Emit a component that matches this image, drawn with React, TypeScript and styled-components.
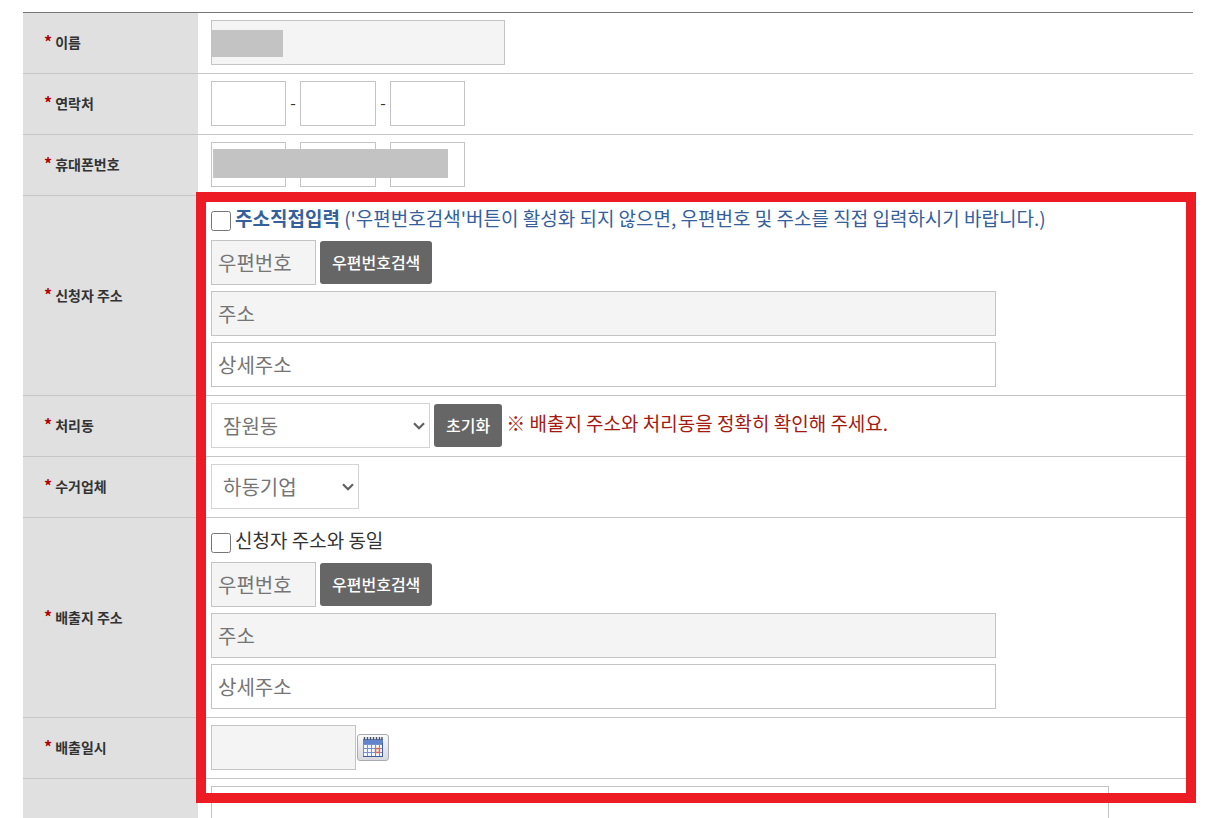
import React from "react";
import styled, { createGlobalStyle } from "styled-components";

const GlobalStyle = createGlobalStyle`
  * { box-sizing: border-box; }
  body {
    margin: 0;
    background: #fff;
    color: #333;
    font-family: "Noto Sans CJK KR", "Noto Sans", sans-serif;
    font-size: 19px;
  }
  button, input, select, textarea { font-family: inherit; margin: 0; }
`;

const Page = styled.main`
  height: 100vh;
  overflow: hidden;
  padding: 12px 15px 0 23px;
`;

const FormArea = styled.form`
  position: relative;
`;

const FormTable = styled.table`
  width: 100%;
  border-collapse: separate;
  border-spacing: 0;
  border-top: 1px solid #777;
`;

const HeadCell = styled.th`
  width: 175px;
  padding: 0 0 3px 21px;
  border-bottom: 1px solid #c6c6c6;
  background: #e0e0e0;
  text-align: left;
  vertical-align: middle;
  font-size: 14px;
  line-height: 20px;
  font-weight: 700;
`;

const Required = styled.span`
  margin-right: 3px;
  color: #b00000;
  font-size: 16px;
`;

const Cell = styled.td`
  padding: 7px 13px 8px;
  border-bottom: 1px solid #c6c6c6;
`;

const Line = styled.div<{ $gap?: number }>`
  position: relative;
  display: flex;
  align-items: center;
  gap: ${(p) => p.$gap ?? 4}px;
`;

const Stack = styled.div`
  display: flex;
  flex-direction: column;
  gap: 6px;
`;

const TextBox = styled.input<{ $width: number }>`
  width: ${(p) => p.$width}px;
  max-width: 100%;
  height: 45px;
  padding: 0 6px;
  border: 1px solid #c4c4c4;
  border-radius: 0;
  background: ${(p) => (p.readOnly ? "#f4f4f4" : "#fff")};
  color: #333;
  font-size: 20px;
  &::placeholder { color: #757575; opacity: 1; }
`;

const SelectWrap = styled.div<{ $width: number }>`
  position: relative;
  width: ${(p) => p.$width}px;
  svg {
    position: absolute;
    right: 4px;
    top: 18px;
    pointer-events: none;
  }
`;

const SelectBox = styled.select`
  appearance: none;
  display: block;
  width: 100%;
  height: 45px;
  padding: 0 24px 0 11px;
  border: 1px solid #d4d4d4;
  border-radius: 0;
  background-color: #fff;
  color: #757575;
  font-size: 20px;
`;

const DarkButton = styled.button`
  height: 43px;
  padding: 0 12px 2px;
  border: 0;
  border-radius: 3px;
  background: #666;
  color: #fff;
  font-size: 16px;
  font-weight: 500;
  white-space: nowrap;
`;

const Dash = styled.span`
  width: 14px;
  padding-bottom: 4px;
  text-align: center;
  font-size: 16px;
`;

const CheckLine = styled.label<{ $blue?: boolean }>`
  display: flex;
  align-items: center;
  gap: 4px;
  height: 31px;
  line-height: 29px;
  color: ${(p) => (p.$blue ? "#34609c" : "#333")};
  span { padding-bottom: 2px; }
`;

const CheckBox = styled.input`
  flex: none;
  width: 20px;
  height: 20px;
  && { margin-top: 5px; }
`;

const Notice = styled.span`
  padding-bottom: 6px;
  color: #a31a10;
`;

const CalendarButton = styled.button`
  width: 32px;
  height: 27px;
  padding: 0;
  border: 1px solid #a9a9b2;
  border-radius: 3px;
  background: linear-gradient(#fafafa, #d8d8de);
  display: grid;
  place-items: center;
`;

const Memo = styled.textarea`
  display: block;
  width: 898px;
  max-width: 100%;
  height: 120px;
  border: 1px solid #c4c4c4;
  border-radius: 0;
  resize: none;
`;

const Mask = styled.span<{ $x: number; $y: number; $w: number; $h: number }>`
  position: absolute;
  left: ${(p) => p.$x}px;
  top: ${(p) => p.$y}px;
  width: ${(p) => p.$w}px;
  height: ${(p) => p.$h}px;
  background: #c3c3c3;
`;

const Highlight = styled.div`
  position: absolute;
  top: 180px;
  left: 173px;
  right: -3px;
  height: 611px;
  border: 10px solid #ed1c24;
  pointer-events: none;
`;

function Row({ label, htmlFor, children }: { label?: string; htmlFor?: string; children: React.ReactNode }) {
  return (
    <tr>
      <HeadCell scope="row">
        {label && (
          <label htmlFor={htmlFor}>
            <Required>*</Required>
            {label}
          </label>
        )}
      </HeadCell>
      <Cell>{children}</Cell>
    </tr>
  );
}

function Select({ id, width, value }: { id: string; width: number; value: string }) {
  return (
    <SelectWrap $width={width}>
      <SelectBox id={id}>
        <option>{value}</option>
      </SelectBox>
      <svg width="14" height="10" viewBox="0 0 14 10" aria-hidden="true">
        <path d="M2 2.200L7 7.200L12 2.200" fill="none" stroke="#606060" strokeWidth="2.200" />
      </svg>
    </SelectWrap>
  );
}

function PhoneFields({ id, label }: { id: string; label: string }) {
  return (
    <>
      <TextBox $width={75} id={id} aria-label={`${label} 1`} />
      <Dash>-</Dash>
      <TextBox $width={76} aria-label={`${label} 2`} />
      <Dash>-</Dash>
      <TextBox $width={75} aria-label={`${label} 3`} />
    </>
  );
}

function AddressFields({ id }: { id: string }) {
  return (
    <>
      <Line>
        <TextBox $width={105} id={id} readOnly placeholder="우편번호" aria-label="우편번호" />
        <DarkButton type="button">우편번호검색</DarkButton>
      </Line>
      <TextBox $width={785} readOnly placeholder="주소" aria-label="주소" />
      <TextBox $width={785} placeholder="상세주소" aria-label="상세주소" />
    </>
  );
}

function CalendarIcon() {
  return (
    <svg width="22" height="21" viewBox="0 0 22 21" aria-hidden="true">
      <rect x="1" y="2" width="20" height="18" fill="#7391cf" />
      <rect x="1" y="2" width="20" height="5" fill="#6284cc" />
      <path d="M2.500 0v3M5.500 0v3M8.500 0v3M11.500 0v3M14.500 0v3M17.500 0v3M20 0v3" stroke="#4c5260" strokeWidth="1.400" />
      <g fill="#f2f6ff">
        {[8, 12, 16].map((y) =>
          [2, 6, 10, 14, 18].map((x) => <rect key={`${x}-${y}`} x={x} y={y} width={x === 18 ? 2 : 3} height="3" />)
        )}
      </g>
      <rect x="13.500" y="11.500" width="4" height="4" fill="#f8e3dc" stroke="#e0674e" strokeWidth="1.400" />
      <path d="M1 19.500h20M20.500 6v14" stroke="#3e5b9c" />
    </svg>
  );
}

export default function App() {
  return (
    <>
      <GlobalStyle />
      <Page>
        <FormArea>
          <FormTable>
            <tbody>
              <Row label="이름" htmlFor="name">
                <Line>
                  <TextBox $width={294} id="name" readOnly />
                  <Mask $x={0} $y={10} $w={72} $h={27} />
                </Line>
              </Row>
              <Row label="연락처" htmlFor="tel">
                <Line $gap={0}>
                  <PhoneFields id="tel" label="연락처" />
                </Line>
              </Row>
              <Row label="휴대폰번호" htmlFor="mobile">
                <Line $gap={0}>
                  <PhoneFields id="mobile" label="휴대폰번호" />
                  <Mask $x={2} $y={7} $w={235} $h={29} />
                </Line>
              </Row>
              <Row label="신청자 주소" htmlFor="zip">
                <Stack>
                  <CheckLine $blue>
                    <CheckBox type="checkbox" />
                    <span>
                      <b>주소직접입력</b> ('우편번호검색'버튼이 활성화 되지 않으면, 우편번호 및 주소를 직접 입력하시기 바랍니다.)
                    </span>
                  </CheckLine>
                  <AddressFields id="zip" />
                </Stack>
              </Row>
              <Row label="처리동" htmlFor="dong">
                <Line>
                  <Select id="dong" width={219} value="잠원동" />
                  <DarkButton type="button">초기화</DarkButton>
                  <Notice>※ 배출지 주소와 처리동을 정확히 확인해 주세요.</Notice>
                </Line>
              </Row>
              <Row label="수거업체" htmlFor="company">
                <Line>
                  <Select id="company" width={148} value="하동기업" />
                </Line>
              </Row>
              <Row label="배출지 주소" htmlFor="outZip">
                <Stack>
                  <CheckLine>
                    <CheckBox type="checkbox" />
                    <span>신청자 주소와 동일</span>
                  </CheckLine>
                  <AddressFields id="outZip" />
                </Stack>
              </Row>
              <Row label="배출일시" htmlFor="date">
                <Line $gap={1}>
                  <TextBox $width={145} id="date" readOnly />
                  <CalendarButton type="button" aria-label="달력">
                    <CalendarIcon />
                  </CalendarButton>
                </Line>
              </Row>
              <Row>
                <Memo aria-label="메모" />
              </Row>
            </tbody>
          </FormTable>
          <Highlight />
        </FormArea>
      </Page>
    </>
  );
}
